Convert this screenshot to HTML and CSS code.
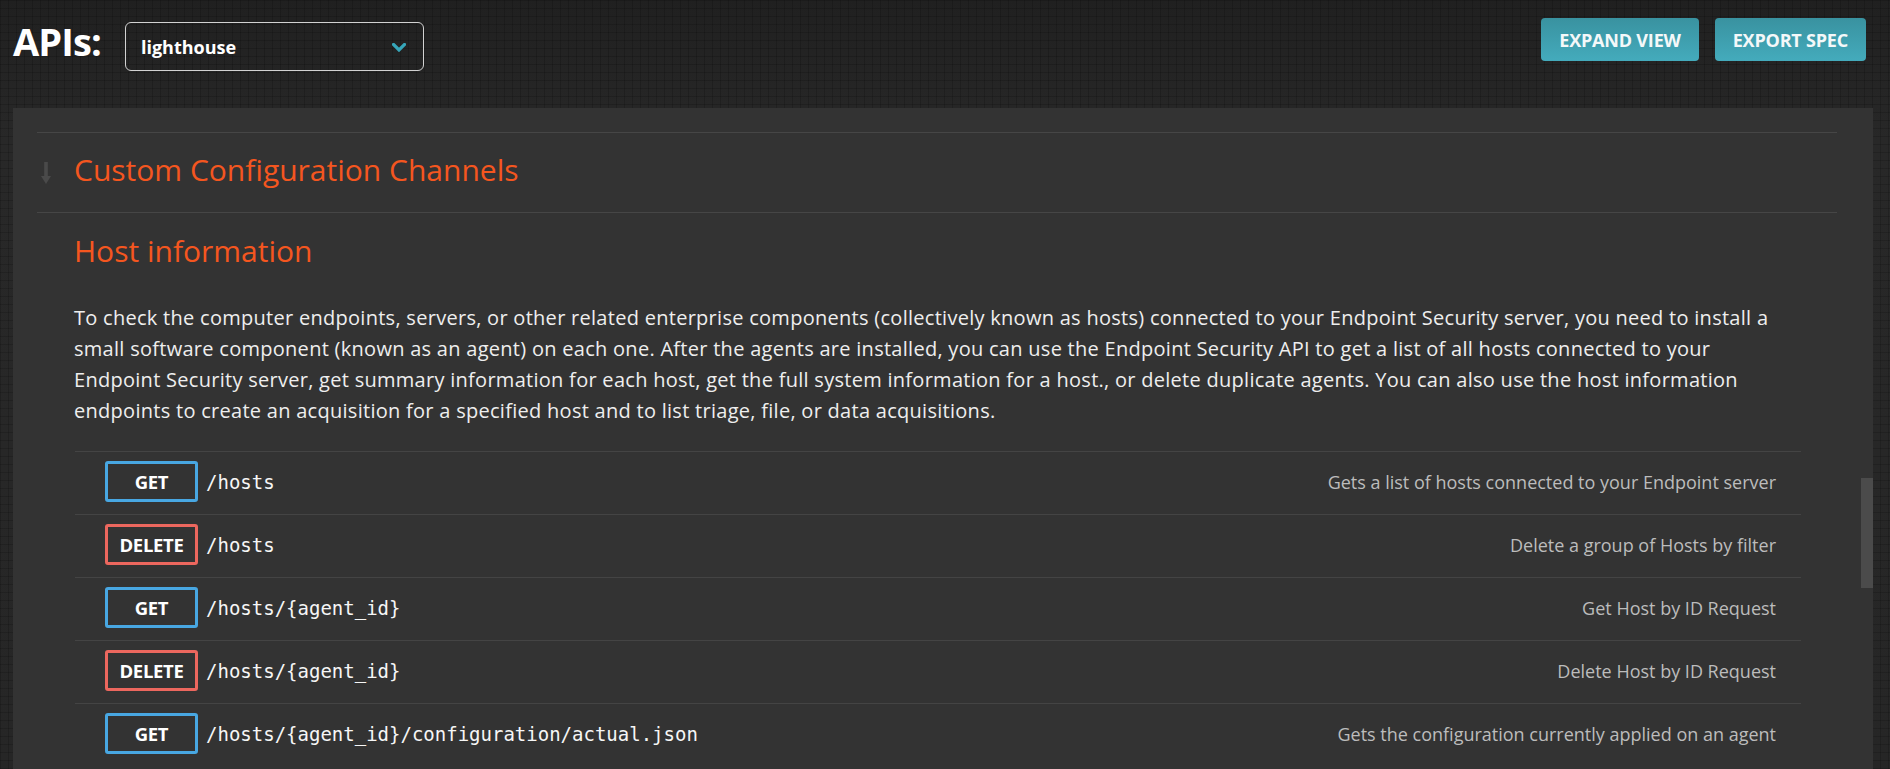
FILE: index.html
```html
<!DOCTYPE html>
<html lang="en">
<head>
<meta charset="utf-8">
<title>APIs - lighthouse</title>
<link rel="stylesheet" href="styles.css">
</head>
<body>
<header class="topbar">
  <div class="topbar-left">
    <h1 class="apis-title">APIs:</h1>
    <div class="api-select">
      <span class="api-select-value">lighthouse</span>
      <svg class="chevron" width="14" height="9" viewBox="0 0 14 9"><path d="M1.5 1.5 L7 7 L12.5 1.5" fill="none" stroke="#36a6b9" stroke-width="3.2" stroke-linecap="square"/></svg>
    </div>
  </div>
  <div class="topbar-actions">
    <button class="btn">EXPAND VIEW</button>
    <button class="btn">EXPORT SPEC</button>
  </div>
</header>

<main class="panel">
  <section class="group group-collapsed">
    <svg class="group-arrow" width="10" height="23" viewBox="0 0 10 23"><path d="M3.2 0 H6.8 V14 H10 L5 22 L0 14 H3.2 Z" fill="#4a4a4a"/></svg>
    <h2 class="group-title">Custom Configuration Channels</h2>
  </section>

  <section class="group group-open">
    <h2 class="group-title">Host information</h2>
    <p class="group-desc">To check the computer endpoints, servers, or other related enterprise components (collectively known as hosts) connected to your Endpoint Security server, you need to install a small software component (known as an agent) on each one. After the agents are installed, you can use the Endpoint Security API to get a list of all hosts connected to your Endpoint Security server, get summary information for each host, get the full system information for a host., or delete duplicate agents. You can also use the host information endpoints to create an acquisition for a specified host and to list triage, file, or data acquisitions.</p>

    <ul class="endpoints">
      <li class="endpoint">
        <span class="method method-get">GET</span>
        <span class="path">/hosts</span>
        <span class="summary">Gets a list of hosts connected to your Endpoint server</span>
      </li>
      <li class="endpoint">
        <span class="method method-delete">DELETE</span>
        <span class="path">/hosts</span>
        <span class="summary">Delete a group of Hosts by filter</span>
      </li>
      <li class="endpoint">
        <span class="method method-get">GET</span>
        <span class="path">/hosts/{agent_id}</span>
        <span class="summary">Get Host by ID Request</span>
      </li>
      <li class="endpoint">
        <span class="method method-delete">DELETE</span>
        <span class="path">/hosts/{agent_id}</span>
        <span class="summary">Delete Host by ID Request</span>
      </li>
      <li class="endpoint">
        <span class="method method-get">GET</span>
        <span class="path">/hosts/{agent_id}/configuration/actual.json</span>
        <span class="summary">Gets the configuration currently applied on an agent</span>
      </li>
    </ul>
  </section>

  <div class="scroll-thumb"></div>
</main>
</body>
</html>
```

FILE: styles.css
```css
* {
  box-sizing: border-box;
}

html, body {
  height: 100%;
}

body {
  margin: 0;
  overflow: hidden;
  font-family: "Open Sans", "Noto Sans", sans-serif;
  color: #eeeeee;
  background-color: #262626;
  background-image:
    linear-gradient(rgba(0, 0, 0, 0.16) 1px, transparent 1px),
    linear-gradient(90deg, rgba(0, 0, 0, 0.16) 1px, transparent 1px),
    linear-gradient(#202020, #282828 140px, #262626);
  background-size: 8px 8px, 8px 8px, 100% 100%;
}

/* ---------- top bar ---------- */
.topbar {
  height: 108px;
  display: flex;
  justify-content: space-between;
  align-items: flex-start;
  padding: 0 24px 0 13px;
}

.topbar-left {
  display: flex;
  align-items: flex-start;
  gap: 24px;
}

.apis-title {
  margin: 22px 0 0;
  font-size: 38px;
  line-height: 38px;
  font-weight: 700;
  color: #ffffff;
  letter-spacing: -0.9px;
}

.api-select {
  margin-top: 22px;
  width: 299px;
  height: 49px;
  border: 1px solid #d2d2d2;
  border-radius: 6px;
  display: flex;
  align-items: center;
  justify-content: space-between;
  padding: 0 17px 0 15px;
}

.api-select-value {
  font-size: 18px;
  font-weight: 700;
  color: #ffffff;
}

.chevron {
  display: block;
  margin-top: 1px;
}

.topbar-actions {
  display: flex;
  gap: 16px;
  margin-top: 18px;
}

.btn {
  height: 43px;
  padding: 0 18px;
  border: none;
  border-radius: 4px;
  background: linear-gradient(#3992a0, #44abbc);
  color: #f4f8f9;
  font-family: "Open Sans", "Noto Sans", sans-serif;
  font-size: 18px;
  font-weight: 700;
  letter-spacing: -0.2px;
}

/* ---------- panel ---------- */
.panel {
  position: relative;
  margin-left: 13px;
  width: 1860px;
  height: 661px;
  background: #333333;
  padding: 24px 36px 0 24px;
  overflow: hidden;
}

.group {
  position: relative;
  border-top: 1px solid #464646;
  padding: 0 36px 0 37px;
}

.group-collapsed {
  padding-top: 17px;
  padding-bottom: 22px;
}

.group-open {
  padding-top: 18px;
}

.group-arrow {
  position: absolute;
  left: 4px;
  top: 29px;
}

.group-title {
  margin: 0;
  font-size: 30px;
  line-height: 40px;
  font-weight: 400;
  color: #f5561f;
}

.group-desc {
  margin: 31px 0 0;
  font-size: 20px;
  line-height: 31px;
  letter-spacing: 0.28px;
  color: #eeeeee;
}

/* ---------- endpoints ---------- */
.endpoints {
  list-style: none;
  margin: 25px 0 0 1px;
  padding: 0;
}

.endpoint {
  display: flex;
  align-items: center;
  border-top: 1px solid #444444;
  padding: 9px 25px 12px 30px;
}

.method {
  width: 93px;
  height: 41px;
  border: 3px solid;
  border-radius: 3px;
  display: flex;
  align-items: center;
  justify-content: center;
  font-size: 18.5px;
  font-weight: 700;
  color: #ffffff;
  letter-spacing: -0.3px;
  flex: none;
}

.method-get {
  border-color: #48a7e2;
}

.method-delete {
  border-color: #ec675e;
}

.path {
  margin-left: 8px;
  font-family: "DejaVu Sans Mono", "Liberation Mono", monospace;
  font-size: 19px;
  color: #f6f6f6;
}

.summary {
  margin-left: auto;
  font-size: 18px;
  color: #bcbcbc;
}

.scroll-thumb {
  position: absolute;
  right: 0;
  top: 370px;
  width: 12px;
  height: 110px;
  background: #4b4b4b;
}
```
